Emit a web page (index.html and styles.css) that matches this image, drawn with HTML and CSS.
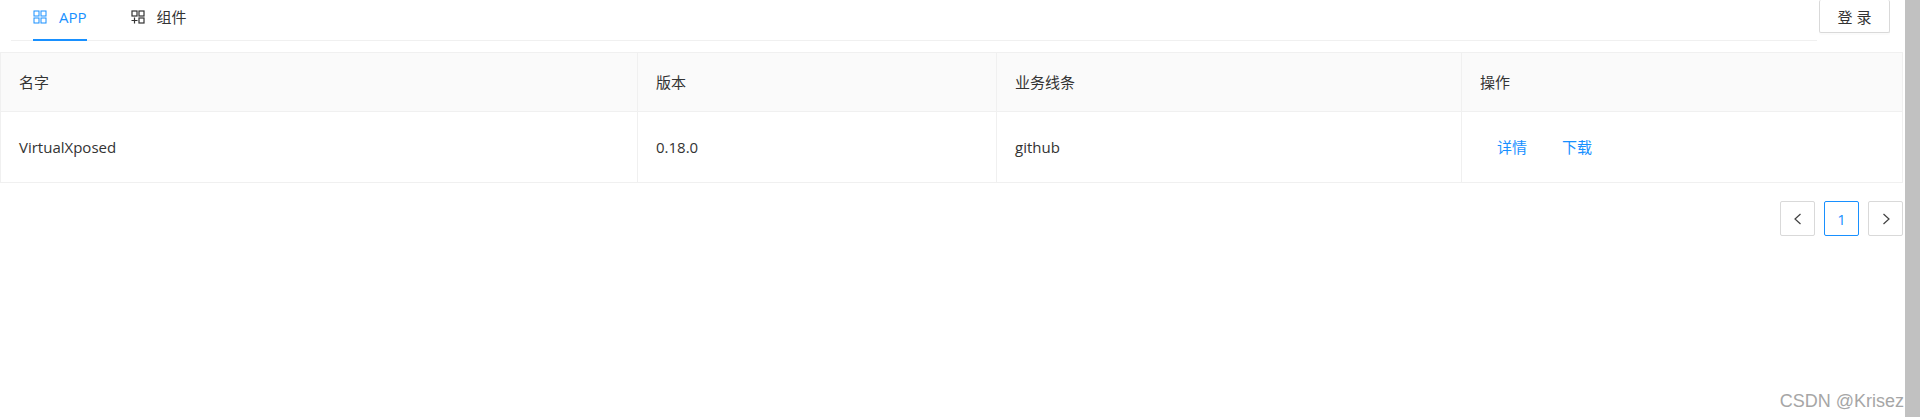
FILE: index.html
```html
<!DOCTYPE html>
<html lang="zh-CN">
<head>
  <meta charset="UTF-8">
  <title>APP</title>
  <link rel="stylesheet" href="styles.css">
</head>
<body>
  <div class="page">
    <div class="content">
      <header class="topbar">
        <nav class="tabs">
          <a href="#" class="tab active">
            <svg class="tab-icon" viewBox="0 0 14 14" fill="none" stroke="currentColor" stroke-width="1">
              <rect x="1" y="1" width="5" height="5"/>
              <rect x="8" y="1" width="5" height="5"/>
              <rect x="1" y="8" width="5" height="5"/>
              <rect x="8" y="8" width="5" height="5"/>
            </svg>
            APP
          </a>
          <a href="#" class="tab">
            <svg class="tab-icon" viewBox="0 0 14 14" fill="none" stroke="currentColor" stroke-width="1.2">
              <rect x="1" y="1" width="5" height="5"/>
              <rect x="8" y="1" width="5" height="5"/>
              <rect x="8" y="8" width="5" height="5"/>
              <path d="M0.5 10.5h6M3.5 7.5v6"/>
            </svg>
            组件
          </a>
        </nav>
        <button class="login">登 录</button>
      </header>

      <table class="list">
        <colgroup>
          <col class="col-name">
          <col class="col-version">
          <col class="col-line">
          <col>
        </colgroup>
        <thead>
          <tr>
            <th>名字</th>
            <th>版本</th>
            <th>业务线条</th>
            <th>操作</th>
          </tr>
        </thead>
        <tbody>
          <tr>
            <td>VirtualXposed</td>
            <td>0.18.0</td>
            <td>github</td>
            <td class="actions">
              <a href="#" class="action">详情</a>
              <a href="#" class="action">下载</a>
            </td>
          </tr>
        </tbody>
      </table>

      <div class="pager">
        <a href="#" class="page-btn">
          <svg viewBox="0 0 12 12" fill="none" stroke="currentColor" stroke-width="1.2"><path d="M8.5 1L3 6l5.5 5"/></svg>
        </a>
        <a href="#" class="page-btn current">1</a>
        <a href="#" class="page-btn">
          <svg viewBox="0 0 12 12" fill="none" stroke="currentColor" stroke-width="1.2"><path d="M3.5 1L9 6l-5.5 5"/></svg>
        </a>
      </div>
    </div>
    <div class="scrollbar"></div>
  </div>
  <div class="watermark">CSDN @Krisez</div>
</body>
</html>
```

FILE: styles.css
```css
:root {
  --blue: #1890ff;
  --line: #f0f0f0;
  --text: #333;
}

html, body {
  margin: 0;
  height: 100%;
  overflow: hidden;
}

body {
  font-family: "Open Sans", "Noto Sans CJK SC", sans-serif;
  font-size: 15px;
  color: var(--text);
  background: #fff;
}

.page {
  display: flex;
  height: 417px;
}

.content {
  flex: 1;
  min-width: 0;
}

.scrollbar {
  width: 15px;
  background: #c1c1c1;
}

.topbar {
  display: flex;
  height: 41px;
  padding: 0 15px 0 11px;
  margin-bottom: 11px;
}

.tabs {
  flex: 1;
  display: flex;
  gap: 44px;
  box-sizing: border-box;
  height: 41px;
  padding-left: 22px;
  border-bottom: 1px solid var(--line);
}

.tab {
  display: flex;
  align-items: center;
  gap: 12px;
  box-sizing: border-box;
  height: 41px;
  padding-bottom: 6px;
  color: var(--text);
  text-decoration: none;
  border-bottom: 2px solid transparent;
}

.tab.active {
  color: var(--blue);
  border-bottom-color: var(--blue);
}

.tab-icon {
  width: 14px;
  height: 14px;
}

.login {
  width: 71px;
  height: 33px;
  margin-left: 2px;
  background: #fff;
  border: 1px solid #d9d9d9;
  border-top: 0;
  border-radius: 2px;
  box-shadow: 0 2px 0 rgba(0, 0, 0, 0.015);
  font-family: inherit;
  font-size: 15px;
  color: var(--text);
}

.list {
  width: 1903px;
  border-collapse: collapse;
  table-layout: fixed;
  border: 1px solid var(--line);
}

.col-name { width: 637px; }
.col-version { width: 359px; }
.col-line { width: 465px; }

.list th, .list td {
  padding: 0 18px;
  text-align: left;
  font-weight: 400;
  border: 1px solid var(--line);
  border-width: 0 1px 1px 0;
}

.list th {
  height: 56px;
  padding-bottom: 2px;
  background: #fafafa;
}

.list td {
  height: 70px;
}

.list td.actions {
  height: 68px;
  padding-bottom: 2px;
}

.action {
  color: var(--blue);
  text-decoration: none;
  margin-left: 17px;
  margin-right: 14px;
}

.pager {
  display: flex;
  justify-content: flex-end;
  gap: 9px;
  margin-top: 18px;
  padding-right: 2px;
}

.page-btn {
  display: flex;
  align-items: center;
  justify-content: center;
  box-sizing: border-box;
  width: 35px;
  height: 35px;
  border: 1px solid #d9d9d9;
  border-radius: 2px;
  color: #404040;
  text-decoration: none;
  font-weight: 500;
}

.page-btn svg {
  width: 12px;
  height: 12px;
}

.page-btn.current {
  border-color: var(--blue);
  color: var(--blue);
}

.watermark {
  position: absolute;
  right: 16px;
  bottom: 5px;
  font-family: "Liberation Sans", Arial, sans-serif;
  font-size: 18px;
  color: #a6a6a6;
}
```
